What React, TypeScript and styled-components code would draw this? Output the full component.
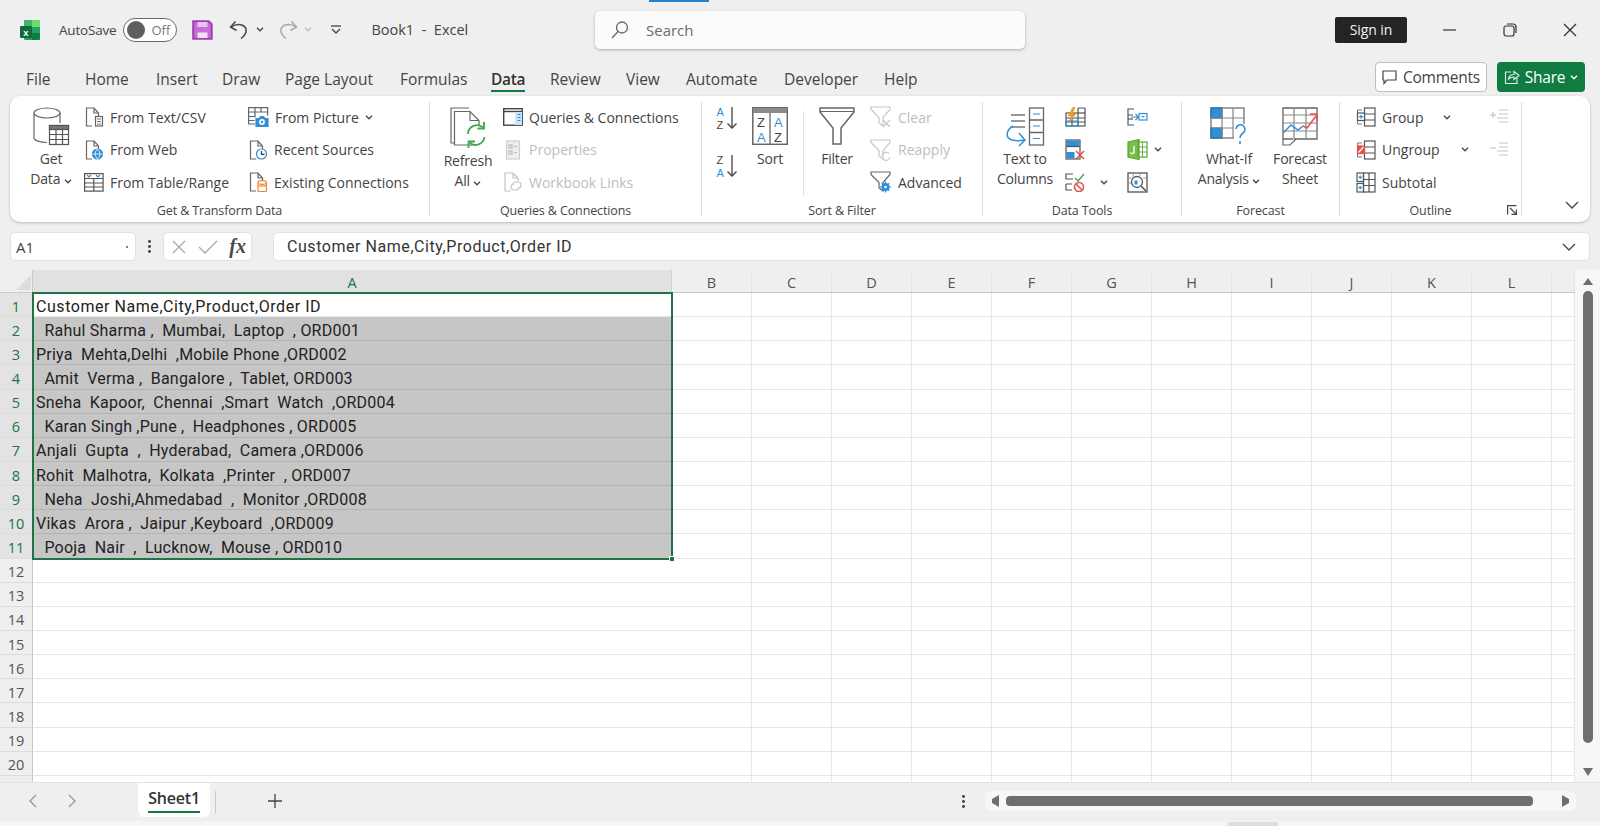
import React from "react";
import styled, { createGlobalStyle } from "styled-components";

const UI_FONT = `"Open Sans", "Noto Sans", "Liberation Sans", sans-serif`;
const CELL_FONT = `Roboto, "Liberation Sans", sans-serif`;

const GlobalStyle = createGlobalStyle`
  html, body {
    margin: 0;
    padding: 0;
    background: #efefef;
  }
  * {
    box-sizing: border-box;
  }
`;

const Window = styled.div`
  position: relative;
  width: 1600px;
  height: 826px;
  overflow: hidden;
  display: flex;
  flex-direction: column;
  background: #efefef;
  font-family: ${UI_FONT};
  color: #424242;
`;

const LoadBar = styled.div`
  position: absolute;
  left: 649px;
  top: 0;
  width: 60px;
  height: 2px;
  background: #1a86d9;
`;

const TitleBar = styled.div`
  height: 60px;
  display: flex;
  align-items: center;
`;

const TitleLeft = styled.div`
  width: 595px;
  display: flex;
  align-items: center;
  padding-left: 20px;
`;

const Slot = styled.div<{ $ml?: number }>`
  display: flex;
  align-items: center;
  flex: none;
  margin-left: ${(p) => p.$ml ?? 0}px;
`;

const AutoSaveText = styled.span`
  font-size: 13.5px;
  letter-spacing: -0.2px;
  color: #444;
`;

const Toggle = styled.div`
  width: 54px;
  height: 24px;
  border: 1.5px solid #6a6a6a;
  border-radius: 12px;
  background: #fff;
  display: flex;
  align-items: center;
  padding-left: 3px;
  font-size: 13px;
  color: #777;
`;

const Knob = styled.span`
  width: 18px;
  height: 18px;
  border-radius: 50%;
  background: #5e5e5e;
  margin-right: 6px;
`;

const BookTitle = styled.span`
  font-size: 14.5px;
  white-space: pre;
  color: #444;
`;

const SearchBox = styled.div`
  width: 430px;
  height: 38px;
  flex: none;
  display: flex;
  align-items: center;
  gap: 17px;
  padding-left: 16px;
  background: #fbfbfb;
  border-radius: 5px;
  box-shadow: 0 1px 3px rgba(0, 0, 0, 0.28);
  font-size: 15px;
  color: #6b6b6b;
`;

const SignIn = styled.div`
  width: 72px;
  height: 26px;
  margin-left: 310px;
  flex: none;
  display: flex;
  align-items: center;
  justify-content: center;
  background: #242424;
  border-radius: 2px;
  color: #f2f2f2;
  font-size: 14px;
  letter-spacing: -0.1px;
`;

const TabBar = styled.div`
  height: 37px;
  display: flex;
  padding-left: 26px;
`;

const Tab = styled.div<{ $w: number; $active?: boolean }>`
  width: ${(p) => p.$w}px;
  flex: none;
  padding-top: 9px;
  font-size: 15.5px;
  white-space: nowrap;
  letter-spacing: ${(p) => (p.$active ? "-0.3px" : "0")};
  font-weight: ${(p) => (p.$active ? 600 : 400)};
  color: ${(p) => (p.$active ? "#333" : "#444")};
`;

const TabLabel = styled.span<{ $active?: boolean }>`
  display: inline-block;
  line-height: 22px;
  height: ${(p) => (p.$active ? 24 : 22)}px;
  border-bottom: ${(p) => (p.$active ? "2px solid #107c41" : "none")};
`;

const TabActions = styled.div`
  margin-left: auto;
  display: flex;
  gap: 10px;
  padding: 3px 15px 0 0;
`;

const CommentsButton = styled.div`
  width: 112px;
  height: 30px;
  display: flex;
  align-items: center;
  justify-content: center;
  gap: 6px;
  background: #fff;
  border: 1px solid #bdbdbd;
  border-radius: 4px;
  font-size: 15.5px;
  letter-spacing: -0.25px;
`;

const ShareButton = styled.div`
  width: 88px;
  height: 30px;
  display: flex;
  align-items: center;
  justify-content: center;
  gap: 5px;
  background: #107c41;
  border-radius: 4px;
  color: #fff;
  font-size: 15.5px;
  letter-spacing: -0.25px;
`;

const Ribbon = styled.div`
  height: 126px;
  margin: 0 10px;
  padding: 6px 0;
  flex: none;
  display: flex;
  background: #fff;
  border-radius: 10px;
  box-shadow: 0 1px 3px rgba(0, 0, 0, 0.22);
`;

const Group = styled.div<{ $w: number }>`
  position: relative;
  width: ${(p) => p.$w}px;
  flex: none;
  display: flex;
  flex-direction: column;
  border-right: 1px solid #dcdcdc;
`;

const GroupBody = styled.div<{ $pl: number }>`
  height: 102px;
  display: flex;
  align-items: flex-start;
  padding-left: ${(p) => p.$pl}px;
`;

const GroupLabel = styled.div`
  height: 12px;
  display: flex;
  align-items: center;
  justify-content: center;
  font-size: 12.5px;
  letter-spacing: -0.12px;
  color: #444;
`;

const Launcher = styled.div`
  position: absolute;
  right: 4px;
  bottom: 1px;
  line-height: 0;
`;

const LargeButton = styled.div<{ $w: number; $ml?: number }>`
  width: ${(p) => p.$w}px;
  margin-left: ${(p) => p.$ml ?? 0}px;
  flex: none;
  display: flex;
  flex-direction: column;
  align-items: center;
  padding-top: 5px;
  font-size: 14px;
  letter-spacing: -0.2px;
  color: #444;
`;

const LargeIcon = styled.div`
  height: 39px;
  display: flex;
  align-items: flex-start;
  justify-content: center;
`;

const LargeText = styled.div<{ $gap?: number }>`
  margin-top: ${(p) => p.$gap ?? 3}px;
  line-height: 20px;
  text-align: center;
  white-space: nowrap;
`;

const SmallColumn = styled.div<{ $w?: number; $ml?: number; $gap?: number }>`
  width: ${(p) => (p.$w ? `${p.$w}px` : "auto")};
  margin-left: ${(p) => p.$ml ?? 0}px;
  flex: none;
  display: flex;
  flex-direction: column;
  gap: ${(p) => p.$gap ?? 2.5}px;
`;

const SmallItem = styled.div<{ $disabled?: boolean }>`
  height: 30px;
  display: flex;
  align-items: center;
  gap: 6px;
  white-space: nowrap;
  font-size: 14px;
  color: ${(p) => (p.$disabled ? "#bdbdbd" : "#444")};
`;

const ChevronWrap = styled.span<{ $ml: number }>`
  display: inline-flex;
  margin-left: ${(p) => p.$ml}px;
`;

const VDivider = styled.div<{ $ml: number }>`
  width: 1px;
  height: 85px;
  margin: 9px 0 0 ${(p) => p.$ml}px;
  flex: none;
  background: #e0e0e0;
`;

const RibbonCollapse = styled.div`
  flex: 1;
  display: flex;
  align-items: flex-end;
  justify-content: flex-end;
  padding: 0 11px 7px 0;
`;

const FormulaBar = styled.div`
  height: 29px;
  margin-top: 10px;
  padding: 0 10px;
  flex: none;
  display: flex;
  align-items: stretch;
`;

const NameBox = styled.div`
  width: 126px;
  flex: none;
  display: flex;
  align-items: center;
  justify-content: space-between;
  padding: 0 7px 0 5px;
  background: #fff;
  border: 1px solid #e2e2e2;
  border-radius: 5px;
  font-size: 15px;
  color: #444;
`;

const TinyDot = styled.span`
  width: 2px;
  height: 2px;
  border-radius: 50%;
  background: #555;
`;

const DotsSlot = styled.div`
  width: 27px;
  flex: none;
  display: flex;
  align-items: center;
  justify-content: center;
  line-height: 0;
`;

const FormulaButtons = styled.div`
  width: 89px;
  flex: none;
  display: flex;
  align-items: center;
  justify-content: space-between;
  padding: 0 5px 0 7px;
  background: #fff;
  border: 1px solid #e2e2e2;
  border-radius: 5px;
`;

const FxText = styled.span`
  font-family: "Liberation Serif", serif;
  font-style: italic;
  font-weight: 700;
  font-size: 20px;
  color: #4a4a4a;
`;

const FormulaInput = styled.div`
  flex: 1;
  margin-left: 21px;
  display: flex;
  align-items: center;
  justify-content: space-between;
  padding: 0 13px 0 13px;
  background: #fff;
  border: 1px solid #e2e2e2;
  border-radius: 5px;
  font-family: ${CELL_FONT};
  font-size: 16px;
  letter-spacing: 0.55px;
  color: #333;
  white-space: pre;
`;

const SheetArea = styled.div`
  height: 512px;
  margin-top: 9px;
  flex: none;
  display: flex;
  background: #fff;
`;

const Sheet = styled.div`
  position: relative;
  width: 1575px;
  flex: none;
  overflow: hidden;
`;

const HeaderRow = styled.div`
  height: 23px;
  display: flex;
  background: #efefef;
  border-bottom: 1px solid #c8c8c8;
`;

const Corner = styled.div`
  width: 33px;
  flex: none;
  position: relative;
  display: flex;
  align-items: flex-end;
  justify-content: flex-end;
  padding: 0 1px 2px 0;
  border-right: 1px solid #c8c8c8;
  line-height: 0;
`;

const ColHeader = styled.div<{ $w: number; $selected?: boolean }>`
  width: ${(p) => p.$w}px;
  flex: none;
  display: flex;
  align-items: center;
  justify-content: center;
  padding-top: 2px;
  font-size: 14.5px;
  color: ${(p) => (p.$selected ? "#217346" : "#555")};
  background: ${(p) => (p.$selected ? "#e1e1e1" : "transparent")};
  border-right: 1px solid ${(p) => (p.$selected ? "#d0d0d0" : "#e4e4e4")};
`;

const Row = styled.div`
  height: 24.15px;
  display: flex;
`;

const RowNum = styled.div<{ $selected?: boolean }>`
  width: 33px;
  flex: none;
  display: flex;
  align-items: center;
  justify-content: center;
  padding-top: 3px;
  font-size: 14.5px;
  color: ${(p) => (p.$selected ? "#217346" : "#555")};
  background: ${(p) => (p.$selected ? "#e3e3e3" : "#efefef")};
  border-right: 1px solid #c8c8c8;
  border-bottom: 1px solid #dcdcdc;
`;

const CellA = styled.div<{ $filled?: boolean; $wide?: boolean }>`
  width: 639px;
  flex: none;
  padding: 3px 0 0 3px;
  display: flex;
  align-items: center;
  white-space: pre;
  overflow: hidden;
  font-family: ${CELL_FONT};
  font-size: 16px;
  letter-spacing: ${(p) => (p.$wide ? "0.55px" : "0.22px")};
  color: #222;
  background: ${(p) => (p.$filled ? "#c6c6c6" : "#fff")};
  border-bottom: 1px solid ${(p) => (p.$filled ? "#b3b3b3" : "#e6e6e6")};
`;

const Cell = styled.div<{ $w: number }>`
  width: ${(p) => p.$w}px;
  flex: none;
  border-right: 1px solid #e8e8e8;
  border-bottom: 1px solid #e6e6e6;
`;

const Selection = styled.div`
  position: absolute;
  left: 32px;
  top: 22px;
  width: 641px;
  height: 268px;
  border: 2px solid #217346;
  pointer-events: none;
`;

const FillHandle = styled.div`
  position: absolute;
  right: -4px;
  bottom: -4px;
  width: 6px;
  height: 6px;
  background: #217346;
  border: 1px solid #fff;
`;

const VScroll = styled.div`
  flex: 1;
  display: flex;
  flex-direction: column;
  align-items: center;
  padding: 7px 0 0 0;
  background: #f6f6f6;
`;

const VThumb = styled.div`
  width: 10px;
  height: 452px;
  margin: 5px 0 25px;
  border-radius: 5px;
  background: #6e6e6e;
`;

const SheetBar = styled.div`
  height: 39px;
  flex: none;
  display: flex;
  align-items: flex-start;
  background: #efefef;
  border-top: 1px solid #e2e2e2;
`;

const NavArrows = styled.div`
  width: 138px;
  height: 36px;
  flex: none;
  display: flex;
  align-items: center;
  gap: 31px;
  padding-left: 28px;
`;

const SheetTab = styled.div`
  width: 72px;
  height: 34px;
  flex: none;
  display: flex;
  align-items: flex-start;
  justify-content: center;
  background: #fff;
  border-radius: 0 0 6px 6px;
  font-size: 16px;
  font-weight: 600;
  letter-spacing: -0.2px;
  color: #333;
  padding-top: 4px;
`;

const SheetTabLabel = styled.span`
  display: inline-block;
  height: 26px;
  line-height: 23px;
  border-bottom: 2px solid #107c41;
`;

const TabSeparator = styled.div`
  width: 1px;
  height: 23px;
  margin: 8px 0 0 5px;
  flex: none;
  background: #c9c9c9;
`;

const AddSheet = styled.div`
  height: 36px;
  margin-left: 52px;
  flex: none;
  display: flex;
  align-items: center;
  line-height: 0;
`;

const SheetDots = styled.div`
  height: 36px;
  margin-left: 680px;
  flex: none;
  display: flex;
  align-items: center;
  line-height: 0;
`;

const HScroll = styled.div`
  width: 591px;
  height: 20px;
  margin: 8px 0 0 20px;
  flex: none;
  display: flex;
  align-items: center;
  padding: 0 6px;
  background: #f7f7f7;
  border-radius: 6px;
`;

const HThumb = styled.div`
  width: 527px;
  height: 10px;
  margin: 0 auto 0 7px;
  border-radius: 4px;
  background: #6e6e6e;
`;

const StatusStrip = styled.div`
  flex: 1;
  display: flex;
  justify-content: flex-end;
  padding-right: 322px;
  background: #f5f5f5;
`;

const StatusHandle = styled.div`
  width: 50px;
  height: 4px;
  margin-top: 1px;
  background: #dddddd;
`;

const G = "#666";
const BLUE = "#2f8fd8";

type SvgProps = { w: number; h: number; children: React.ReactNode };

const Svg = ({ w, h, children }: SvgProps) => (
  <svg
    width={w}
    height={h}
    viewBox={`0 0 ${w} ${h}`}
    fill="none"
    stroke={G}
    strokeWidth={1.2}
    style={{ flex: "none", display: "block" }}
  >
    {children}
  </svg>
);

const Chevron = ({ color = "#444" }: { color?: string }) => (
  <svg width="8" height="5" viewBox="0 0 8 5" fill="none" stroke={color} strokeWidth={1.3}>
    <path d="M1 .8l3 3 3-3" />
  </svg>
);

const ExcelLogo = () => (
  <svg width="20" height="20" viewBox="0 0 20 20" style={{ display: "block" }}>
    <rect x="4" y="0" width="16" height="20" rx="1.5" fill="#21a366" />
    <path d="M12 0h6.5A1.5 1.5 0 0 1 20 1.5V7h-8z" fill="#6fdc6a" />
    <path d="M4 0h8v7H4z" fill="#3fb56e" />
    <path d="M12 13h8v5.5a1.5 1.5 0 0 1-1.5 1.5H12z" fill="#107c41" />
    <rect x="0" y="6" width="12" height="12" rx="1" fill="#0f6b3a" />
    <text x="6" y="15.5" textAnchor="middle" fontSize="9.5" fontWeight="700" fill="#fff" fontFamily="Liberation Sans, sans-serif">
      x
    </text>
  </svg>
);

const SaveIcon = () => (
  <svg width="21" height="20" viewBox="0 0 21 20" style={{ display: "block" }}>
    <path d="M1.200 1.200h15.500l3 3v14.600H1.200z" fill="#c86dd7" stroke="#a03fb2" strokeWidth="2" />
    <rect x="5.500" y="2" width="10" height="5" fill="#e9c3ef" />
    <rect x="5.500" y="12.500" width="10" height="5.500" fill="#f3dff6" />
  </svg>
);

const UndoIcon = ({ color }: { color: string }) => (
  <svg width="20" height="20" viewBox="0 0 20 20" fill="none" stroke={color} strokeWidth={1.5} style={{ display: "block" }}>
    <path d="M6.500 1.500L1.500 7l6 3.500" />
    <path d="M2 7c3-2 8-3.500 12-1.500 4.500 2.500 4.500 8-2 13" />
  </svg>
);

const RedoIcon = ({ color }: { color: string }) => (
  <svg width="20" height="20" viewBox="0 0 20 20" fill="none" stroke={color} strokeWidth={1.5} style={{ display: "block" }}>
    <path d="M13.500 1.500l5 5.500-6 3.500" />
    <path d="M18 7c-3-2-8-3.500-12-1.500-4.500 2.500-4.500 8 2 13" />
  </svg>
);

const CustomizeIcon = () => (
  <svg width="10" height="9" viewBox="0 0 10 9" fill="none" stroke="#444" strokeWidth={1.3} style={{ display: "block" }}>
    <path d="M0 1h10" />
    <path d="M1 4l4 4 4-4" />
  </svg>
);

const SearchIcon = () => (
  <svg width="18" height="18" viewBox="0 0 18 18" fill="none" stroke="#666" strokeWidth={1.3} style={{ display: "block" }}>
    <circle cx="11" cy="6.500" r="5.500" />
    <path d="M7 10.500L1 17" />
  </svg>
);

const MinimizeIcon = () => (
  <svg width="13" height="2" viewBox="0 0 13 2" stroke="#333" strokeWidth={1.2} style={{ display: "block" }}>
    <path d="M0 1h13" />
  </svg>
);

const RestoreIcon = () => (
  <svg width="14" height="14" viewBox="0 0 14 14" fill="none" stroke="#333" strokeWidth={1.2} style={{ display: "block" }}>
    <rect x="1" y="3" width="10" height="10" rx="2" />
    <path d="M4 1h6a3 3 0 0 1 3 3v6" />
  </svg>
);

const CloseIcon = () => (
  <svg width="14" height="14" viewBox="0 0 14 14" fill="none" stroke="#333" strokeWidth={1.3} style={{ display: "block" }}>
    <path d="M1 1l12 12M13 1L1 13" />
  </svg>
);

const CommentIcon = () => (
  <svg width="15" height="15" viewBox="0 0 15 15" fill="none" stroke="#444" strokeWidth={1.2}>
    <path d="M1 1h13v9H5l-3 3.500V10H1z" />
  </svg>
);

const ShareIcon = () => (
  <svg width="16" height="16" viewBox="0 0 16 16" fill="none" stroke="#dff0e6" strokeWidth={1.1}>
    <path d="M7 3H1.500v11.500H13V9" />
    <path d="M4.500 10c.3-3 2.500-4.500 5.500-4.500V2.500l5 4-5 4V8c-2.200 0-4 .6-5.500 2z" />
  </svg>
);

/* ribbon icons */

const GetDataIcon = () => (
  <Svg w={37} h={39}>
    <path d="M1 7v24c0 2.500 6 4.500 13 4.500" />
    <ellipse cx="14" cy="6" rx="13" ry="5" />
    <path d="M27 6v10" />
    <rect x="16.500" y="18.500" width="19" height="19" fill="#fff" stroke="#555" />
    <rect x="16.500" y="18.500" width="19" height="4" fill="#777" stroke="#555" />
    <path d="M23 22v15M29.500 22v15M17 27.500h18M17 32.500h18" stroke="#555" />
  </Svg>
);

const DocBase = ({ children }: { children?: React.ReactNode }) => (
  <Svg w={20} h={20}>
    <path d="M8 19H2.500V1H10l4.500 5v3" />
    <path d="M10 1v5h4.500" />
    {children}
  </Svg>
);

const TextIcon = () => (
  <DocBase>
    <rect x="11.500" y="9.500" width="7" height="9.500" fill="#fff" />
    <path d="M13 12h4M13 14.500h4M13 17h4" strokeWidth={0.9} />
  </DocBase>
);

const WebIcon = () => (
  <DocBase>
    <circle cx="13.500" cy="14" r="5" fill={BLUE} stroke={BLUE} />
    <path d="M8.500 14h10M13.500 9c-3 3-3 7 0 10M13.500 9c3 3 3 7 0 10" stroke="#fff" strokeWidth={0.8} />
  </DocBase>
);

const TableIcon = () => (
  <Svg w={20} h={19}>
    <rect x=".6" y=".6" width="18.500" height="17.500" stroke="#555" />
    <path d="M.6 5.500h18.500M.6 10h18.500M.6 14h18.500M9.800 5.500v12.500" stroke="#555" />
    <path d="M3 2l2 2 2-2M12 2l2 2 2-2" stroke={BLUE} />
  </Svg>
);

const PictureIcon = () => (
  <Svg w={21} h={20}>
    <path d="M7 17H.6V.6h19v8" />
    <path d="M.6 5h19M.6 9.500h7M.6 13.500h6M7 .6v10M13 .6v5" />
    <path d="M8 19.400V11.500h3l1.500-2h3l1.500 2h3v7.900z" fill={BLUE} stroke={BLUE} />
    <circle cx="14" cy="15" r="2.300" fill="#fff" stroke="#fff" />
    <circle cx="14" cy="15" r="1.200" fill={BLUE} stroke="none" />
  </Svg>
);

const RecentIcon = () => (
  <DocBase>
    <circle cx="13.500" cy="14" r="5" fill="#fff" stroke={BLUE} />
    <path d="M13.500 11v3.300h3" stroke="#333" />
  </DocBase>
);

const ExistingIcon = () => (
  <DocBase>
    <rect x="10" y="11" width="8.500" height="8.500" rx="1" fill="#fff" stroke="#e98a2e" />
    <ellipse cx="14.200" cy="10.500" rx="4.200" ry="1.800" fill="#fff" stroke="#e98a2e" />
    <path d="M10 14h8.500" stroke="#e98a2e" />
  </DocBase>
);

const RefreshIcon = () => (
  <Svg w={37} h={42}>
    <path d="M4 36H1V1h18" />
    <path d="M26 38H4.500V4.500H20l9 9V19" fill="#fff" />
    <path d="M20 4.500v9h9" />
    <path d="M18 27a9 9 0 0 1 15-6.500M34.500 30a9 9 0 0 1-15 5.500" stroke="#3fa652" strokeWidth={1.8} />
    <path d="M34 15v6.500h-6.500M18.500 41v-6.500H25" stroke="#3fa652" strokeWidth={1.8} />
  </Svg>
);

const QueriesIcon = () => (
  <Svg w={20} h={18}>
    <rect x=".7" y=".7" width="18.500" height="16.500" stroke="#444" strokeWidth={1.4} />
    <path d="M.7 3.500h18.500" stroke="#444" strokeWidth={1.4} />
    <rect x="12" y="4" width="7" height="13" fill="#cfe4f6" stroke="none" />
    <path d="M14.500 6.500h3M14.500 9.500h3M14.500 12.500h3" stroke={BLUE} />
  </Svg>
);

const PropertiesIcon = () => (
  <Svg w={20} h={20}>
    <rect x="3.500" y="1" width="13" height="18" fill="#eee" stroke="#cfcfcf" />
    <rect x="6" y="5" width="3" height="3" stroke="#bbb" />
    <rect x="6" y="11" width="3" height="3" stroke="#bbb" />
    <path d="M11 6.500h3M11 12.500h3" stroke="#bbb" />
  </Svg>
);

const LinksIcon = () => (
  <Svg w={20} h={20}>
    <path d="M8 19H2V1h8l5 5v3M10 1v5h5" stroke="#c4c4c4" />
    <path d="M10 13a3 3 0 0 1 3-3h2a3 3 0 0 1 0 6M16 15a3 3 0 0 1-3 3h-2a3 3 0 0 1 0-6" stroke="#c4c4c4" />
  </Svg>
);

const LetterText = styled.text<{ $blue?: boolean; $big?: boolean }>`
  font-family: "Liberation Sans", sans-serif;
  font-size: ${(p) => (p.$big ? 13 : 11)}px;
  fill: ${(p) => (p.$blue ? BLUE : "#444")};
  stroke: none;
`;

const SortPairIcon = ({ top, bottom, blueFirst }: { top: string; bottom: string; blueFirst: boolean }) => (
  <Svg w={22} h={25}>
    <LetterText x="0.500" y="11" $blue={blueFirst}>
      {top}
    </LetterText>
    <LetterText x="0.500" y="23.500" $blue={!blueFirst}>
      {bottom}
    </LetterText>
    <path d="M16 2v21M11.500 18.500l4.500 4.500 4.500-4.500" stroke="#444" strokeWidth={1.3} />
  </Svg>
);

const SortIcon = () => (
  <Svg w={36} h={38}>
    <rect x=".8" y=".8" width="34.500" height="36.500" stroke="#666" strokeWidth={1.5} />
    <rect x="1" y="1" width="34" height="5" fill="#8a8a8a" stroke="none" />
    <path d="M18 6v31" strokeWidth={1.3} />
    <LetterText x="5" y="19.500" $big>
      Z
    </LetterText>
    <LetterText x="5" y="34.500" $blue $big>
      A
    </LetterText>
    <LetterText x="22" y="19.500" $blue $big>
      A
    </LetterText>
    <LetterText x="22" y="34.500" $big>
      Z
    </LetterText>
  </Svg>
);

const FilterIcon = () => (
  <Svg w={36} h={38}>
    <path d="M1 1h34v4L22 21v16h-8V21L1 5z" strokeWidth={1.5} stroke="#666" />
    <path d="M1 4.500h34" strokeWidth={1.2} />
  </Svg>
);

const FunnelBase = ({ color, children }: { color: string; children?: React.ReactNode }) => (
  <Svg w={22} h={22}>
    <path d="M1 1h19v2.500l-7 8V20l-4-3v-5.500l-8-8z" stroke={color} />
    {children}
  </Svg>
);

const ClearIcon = () => (
  <FunnelBase color="#c8c8c8">
    <path d="M13 14l7 7M20 14l-7 7" stroke="#c8c8c8" />
  </FunnelBase>
);

const ReapplyIcon = () => (
  <FunnelBase color="#c8c8c8">
    <path d="M12 17a4 4 0 0 1 7-2.500M20 18a4 4 0 0 1-7 2" stroke="#c8c8c8" />
  </FunnelBase>
);

const AdvancedIcon = () => (
  <FunnelBase color="#666">
    <circle cx="15.500" cy="16" r="3.500" fill={BLUE} stroke={BLUE} />
    <circle cx="15.500" cy="16" r="1.300" fill="#fff" stroke="none" />
    <path d="M15.500 10.500v2.500M15.500 19v2.500M10 16h2.500M18.500 16H21M11.700 12.200l1.700 1.700M17.600 18.100l1.700 1.700M19.300 12.200l-1.700 1.700M13.400 18.100l-1.700 1.700" stroke={BLUE} strokeWidth={1.2} />
  </FunnelBase>
);

const TextColumnsIcon = () => (
  <Svg w={40} h={40}>
    <path d="M6 8h14M6 14h14M6 20h14" stroke="#777" strokeWidth={1.5} />
    <rect x="24.500" y="1" width="14" height="37" fill="#fff" stroke="#666" strokeWidth={1.3} />
    <path d="M24.500 13h14M24.500 25.500h14" stroke="#666" strokeWidth={1.3} />
    <path d="M28 7h7M28 19h7M28 31.500h7" stroke={BLUE} strokeWidth={1.2} />
    <path d="M8 19c-7 4-8 12-1 14 4 1 8 1 12 0" stroke={BLUE} strokeWidth={1.5} />
    <path d="M14 26l6 7-6 6" stroke={BLUE} strokeWidth={1.5} />
  </Svg>
);

const FlashIcon = () => (
  <Svg w={21} h={20}>
    <rect x="1" y="6" width="19" height="13" stroke="#555" />
    <path d="M1 11h19M1 15h19M7 6v13M13 1v18M20 1v5M13 1h7" stroke="#555" />
    <path d="M8 0L3 9h3.500L4 15l7-8H7.500L10 0z" fill="#ee9a2c" stroke="#ee9a2c" strokeWidth={0.5} />
    <path d="M1 14h12v5H1z" fill="none" stroke={BLUE} />
  </Svg>
);

const DuplicatesIcon = () => (
  <Svg w={21} h={21}>
    <rect x="1" y="1" width="14" height="19" stroke="#555" />
    <rect x="1.500" y="1.500" width="13" height="6" fill={BLUE} stroke="none" />
    <rect x="1.500" y="13" width="8" height="6.500" fill={BLUE} stroke="none" />
    <path d="M1 7.500h14" stroke="#555" />
    <path d="M11 12l8 8M19 12l-8 8" stroke="#e0524a" strokeWidth={1.5} />
  </Svg>
);

const ValidationIcon = () => (
  <Svg w={21} h={20}>
    <path d="M8 2H1v5h7M1 12v6h6M1 12h6" stroke="#555" />
    <path d="M10 6l3 3 6-7" stroke="#3fa652" strokeWidth={1.4} />
    <circle cx="14" cy="15" r="4.500" stroke="#e0524a" strokeWidth={1.6} />
    <path d="M11 12l6 6" stroke="#e0524a" strokeWidth={1.6} />
  </Svg>
);

const ConsolidateIcon = () => (
  <Svg w={21} h={18}>
    <path d="M7 1H1v6h5M1 7v10h6" stroke="#555" />
    <path d="M1 11h5" stroke="#555" />
    <path d="M4 9h7M8.500 6l3 3-3 3" stroke={BLUE} />
    <rect x="12" y="5.500" width="8" height="6.500" stroke={BLUE} />
    <path d="M14.500 8.700h3" stroke={BLUE} />
  </Svg>
);

const ModelIcon = () => (
  <Svg w={21} h={21}>
    <path d="M1 3l11-2.500V20.500L1 18z" fill="#7bbf4a" stroke="#5ba52f" />
    <rect x="11" y="3" width="9" height="15" stroke="#5ba52f" />
    <path d="M11 8h9M11 13h9M15.500 3v15" stroke="#5ba52f" strokeWidth={0.9} />
    <path d="M7 7v6.500a2 2 0 0 1-3.500 0" stroke="#fff" strokeWidth={1.3} />
  </Svg>
);

const ManageModelIcon = () => (
  <Svg w={21} h={21}>
    <rect x="1" y="1" width="19" height="19" stroke="#555" strokeWidth={1.3} />
    <path d="M1 6h4M1 11h4M6 1v4M13 1v3M16 6h4" stroke="#888" strokeWidth={0.8} />
    <circle cx="10" cy="10" r="5.500" fill="#fff" stroke="#555" strokeWidth={1.3} />
    <rect x="7.500" y="8.500" width="3" height="4" fill={BLUE} stroke="none" />
    <path d="M14 14l5 5" stroke="#555" strokeWidth={1.6} />
  </Svg>
);

const WhatIfIcon = () => (
  <Svg w={38} h={38}>
    <rect x="1" y="1" width="33" height="30" stroke="#666" strokeWidth={1.2} />
    <rect x="1" y="1" width="11" height="10" fill={BLUE} stroke="#1e6fb0" />
    <rect x="1" y="21" width="11" height="10" fill={BLUE} stroke="#1e6fb0" />
    <path d="M12 1v30M23 1v30M1 11h33M1 21h33" stroke="#888" />
    <rect x="24" y="17" width="13" height="20" fill="#fff" stroke="none" />
    <path d="M26 22a4.500 4.500 0 1 1 7 4c-2 1.500-3 2.500-3 5" stroke={BLUE} strokeWidth={1.6} />
    <path d="M30 34v3" stroke={BLUE} strokeWidth={1.6} />
  </Svg>
);

const ForecastIcon = () => (
  <Svg w={36} h={39}>
    <path d="M11 32H1V1h34v31H12" stroke="#666" strokeWidth={1.3} />
    <path d="M1 8h34M1 16h34M1 24h34M12 1v31M24 1v31" stroke="#888" />
    <path d="M1 26l8-8 7 5 5-4" stroke={BLUE} strokeWidth={1.5} />
    <path d="M21 19l4 2 9-12" stroke="#e0524a" strokeWidth={1.5} />
    <path d="M28 7h7v7" stroke="#e0524a" strokeWidth={1.5} />
    <path d="M1 32v6h7l6-6" stroke="#666" strokeWidth={1.2} />
  </Svg>
);

const GroupIcon = ({ color, mark }: { color: string; mark: "plus" | "slash" }) => (
  <Svg w={20} h={20}>
    <rect x="8.500" y="1" width="10.500" height="18" stroke="#555" />
    <path d="M8.500 7h10.500M8.500 13h10.500" stroke="#555" />
    <path d="M6 3H1.500v14H6" stroke="#555" strokeWidth={0.8} />
    <rect x="1.500" y="6" width="7" height="7.500" fill={mark === "plus" ? "#fff" : color} stroke={mark === "plus" ? "#555" : color} />
    {mark === "plus" ? (
      <path d="M3 9.700h4M5 7.700v4" stroke={color} strokeWidth={1.2} />
    ) : (
      <path d="M2.500 12.500l5-5.500" stroke="#fff" strokeWidth={1.2} />
    )}
  </Svg>
);

const SubtotalIcon = () => (
  <Svg w={20} h={21}>
    <rect x="7.500" y="1" width="11.500" height="19" stroke="#555" />
    <path d="M7.500 7.500H19M7.500 13.500H19M13 1v19" stroke="#555" />
    <rect x="1" y="1" width="6.500" height="8.500" stroke="#555" />
    <rect x="1" y="11.500" width="6.500" height="8.500" stroke="#555" />
    <path d="M2.500 5.200h3.500M4.200 3.500v3.500M2.500 15.700h3.500M4.200 14v3.500" stroke={BLUE} />
  </Svg>
);

const OutlineDetailIcon = ({ minus }: { minus?: boolean }) => (
  <Svg w={20} h={18}>
    <path d="M10 2h9M10 6h9M8 10h11M10 14h9" stroke="#c6c6c6" />
    <path d="M1 7h6" stroke="#c6c6c6" />
    {!minus && <path d="M4 4v6" stroke="#c6c6c6" />}
  </Svg>
);

const LauncherIcon = () => (
  <Svg w={10} h={10}>
    <path d="M.6 9.400V.6h8.800" stroke="#444" />
    <path d="M3 3l5.500 5.500M9.400 4.500v4.900H4.500" stroke="#444" />
  </Svg>
);

const NameBoxX = () => (
  <Svg w={16} h={16}>
    <path d="M2 2l12 12M14 2L2 14" stroke="#a8a8a8" strokeWidth={1.3} />
  </Svg>
);

const CheckMark = () => (
  <Svg w={20} h={16}>
    <path d="M1 8l6 6L19 2" stroke="#a8a8a8" strokeWidth={1.3} />
  </Svg>
);

const VerticalDots = ({ color = "#444" }: { color?: string }) => (
  <svg width="3" height="13" viewBox="0 0 3 13" fill={color}>
    <rect width="3" height="3" rx="1.400" />
    <rect y="5" width="3" height="3" rx="1.400" />
    <rect y="10" width="3" height="3" rx="1.400" />
  </svg>
);

const NavIcon = ({ left }: { left?: boolean }) => (
  <svg width="9" height="14" viewBox="0 0 9 14" fill="none" stroke="#9a9a9a" strokeWidth={1.4} style={{ display: "block" }}>
    <path d={left ? "M8 1L2 7l6 6" : "M1 1l6 6-6 6"} />
  </svg>
);

const PlusIcon = () => (
  <svg width="14" height="14" viewBox="0 0 14 14" stroke="#444" strokeWidth={1.3}>
    <path d="M7 0v14M0 7h14" />
  </svg>
);

const Triangle = ({ dir }: { dir: "up" | "down" | "left" | "right" }) => {
  const paths = {
    up: "M5 1L10 8H0z",
    down: "M0 0h10L5 8z",
    left: "M8 0v12L1 8V4z",
    right: "M0 0v12l7-4V4z",
  };
  const size = dir === "up" || dir === "down" ? [10, 9] : [8, 12];
  return (
    <svg width={size[0]} height={size[1]} viewBox={`0 0 ${size[0]} ${size[1]}`} fill="#6e6e6e" style={{ display: "block", flex: "none" }}>
      <path d={paths[dir]} />
    </svg>
  );
};

const tabs: [string, number][] = [
  ["File", 59],
  ["Home", 71],
  ["Insert", 66],
  ["Draw", 63],
  ["Page Layout", 115],
  ["Formulas", 91],
  ["Data", 59],
  ["Review", 76],
  ["View", 60],
  ["Automate", 98],
  ["Developer", 100],
  ["Help", 40],
];

const cells = [
  "Customer Name,City,Product,Order ID",
  "  Rahul Sharma ,  Mumbai,  Laptop  , ORD001",
  "Priya  Mehta,Delhi  ,Mobile Phone ,ORD002",
  "  Amit  Verma ,  Bangalore ,  Tablet, ORD003",
  "Sneha  Kapoor,  Chennai  ,Smart  Watch  ,ORD004",
  "  Karan Singh ,Pune ,  Headphones , ORD005",
  "Anjali  Gupta  ,  Hyderabad,  Camera ,ORD006",
  "Rohit  Malhotra,  Kolkata  ,Printer  , ORD007",
  "  Neha  Joshi,Ahmedabad  ,  Monitor ,ORD008",
  "Vikas  Arora ,  Jaipur ,Keyboard  ,ORD009",
  "  Pooja  Nair  ,  Lucknow,  Mouse , ORD010",
];

const columns: [string, number][] = [
  ["B", 80],
  ["C", 80],
  ["D", 80],
  ["E", 80],
  ["F", 80],
  ["G", 80],
  ["H", 80],
  ["I", 80],
  ["J", 80],
  ["K", 80],
  ["L", 80],
  ["", 23],
];

const rows = Array.from({ length: 21 }, (_, i) => i + 1);

const App = () => {
  return (
    <Window>
      <GlobalStyle />
      <LoadBar />

      <TitleBar>
        <TitleLeft>
          <ExcelLogo />
          <Slot $ml={19}>
            <AutoSaveText>AutoSave</AutoSaveText>
          </Slot>
          <Slot $ml={7}>
            <Toggle>
              <Knob />
              Off
            </Toggle>
          </Slot>
          <Slot $ml={15}>
            <SaveIcon />
          </Slot>
          <Slot $ml={16}>
            <UndoIcon color="#444" />
          </Slot>
          <Slot $ml={7}>
            <Chevron />
          </Slot>
          <Slot $ml={14}>
            <RedoIcon color="#a8a8a8" />
          </Slot>
          <Slot $ml={6}>
            <Chevron color="#bbb" />
          </Slot>
          <Slot $ml={19}>
            <CustomizeIcon />
          </Slot>
          <Slot $ml={30}>
            <BookTitle>Book1  -  Excel</BookTitle>
          </Slot>
        </TitleLeft>
        <SearchBox>
          <SearchIcon />
          Search
        </SearchBox>
        <SignIn>Sign in</SignIn>
        <Slot $ml={36}>
          <MinimizeIcon />
        </Slot>
        <Slot $ml={47}>
          <RestoreIcon />
        </Slot>
        <Slot $ml={46}>
          <CloseIcon />
        </Slot>
      </TitleBar>

      <TabBar>
        {tabs.map(([name, w]) => (
          <Tab key={name} $w={w} $active={name === "Data"}>
            <TabLabel $active={name === "Data"}>{name}</TabLabel>
          </Tab>
        ))}
        <TabActions>
          <CommentsButton>
            <CommentIcon />
            Comments
          </CommentsButton>
          <ShareButton>
            <ShareIcon />
            Share
            <Chevron color="#fff" />
          </ShareButton>
        </TabActions>
      </TabBar>

      <Ribbon>
        <Group $w={420}>
          <GroupBody $pl={11}>
            <LargeButton $w={60}>
              <LargeIcon>
                <GetDataIcon />
              </LargeIcon>
              <LargeText>
                Get
                <br />
                Data <Chevron />
              </LargeText>
            </LargeButton>
            <SmallColumn $w={164} $ml={3}>
              <SmallItem>
                <TextIcon />
                From Text/CSV
              </SmallItem>
              <SmallItem>
                <WebIcon />
                From Web
              </SmallItem>
              <SmallItem>
                <TableIcon />
                From Table/Range
              </SmallItem>
            </SmallColumn>
            <SmallColumn>
              <SmallItem>
                <PictureIcon />
                From Picture <Chevron />
              </SmallItem>
              <SmallItem>
                <RecentIcon />
                Recent Sources
              </SmallItem>
              <SmallItem>
                <ExistingIcon />
                Existing Connections
              </SmallItem>
            </SmallColumn>
          </GroupBody>
          <GroupLabel>Get &amp; Transform Data</GroupLabel>
        </Group>

        <Group $w={272}>
          <GroupBody $pl={6}>
            <LargeButton $w={64}>
              <LargeIcon>
                <RefreshIcon />
              </LargeIcon>
              <LargeText $gap={5}>
                Refresh
                <br />
                All <Chevron />
              </LargeText>
            </LargeButton>
            <SmallColumn $ml={3}>
              <SmallItem>
                <QueriesIcon />
                Queries &amp; Connections
              </SmallItem>
              <SmallItem $disabled>
                <PropertiesIcon />
                Properties
              </SmallItem>
              <SmallItem $disabled>
                <LinksIcon />
                Workbook Links
              </SmallItem>
            </SmallColumn>
          </GroupBody>
          <GroupLabel>Queries &amp; Connections</GroupLabel>
        </Group>

        <Group $w={281}>
          <GroupBody $pl={14}>
            <SmallColumn $gap={18}>
              <SmallItem>
                <SortPairIcon top="A" bottom="Z" blueFirst />
              </SmallItem>
              <SmallItem>
                <SortPairIcon top="Z" bottom="A" blueFirst={false} />
              </SmallItem>
            </SmallColumn>
            <LargeButton $w={44} $ml={10}>
              <LargeIcon>
                <SortIcon />
              </LargeIcon>
              <LargeText>Sort</LargeText>
            </LargeButton>
            <VDivider $ml={11} />
            <LargeButton $w={50} $ml={8}>
              <LargeIcon>
                <FilterIcon />
              </LargeIcon>
              <LargeText>Filter</LargeText>
            </LargeButton>
            <SmallColumn $ml={8}>
              <SmallItem $disabled>
                <ClearIcon />
                Clear
              </SmallItem>
              <SmallItem $disabled>
                <ReapplyIcon />
                Reapply
              </SmallItem>
              <SmallItem>
                <AdvancedIcon />
                Advanced
              </SmallItem>
            </SmallColumn>
          </GroupBody>
          <GroupLabel>Sort &amp; Filter</GroupLabel>
        </Group>

        <Group $w={199}>
          <GroupBody $pl={4}>
            <LargeButton $w={76}>
              <LargeIcon>
                <TextColumnsIcon />
              </LargeIcon>
              <LargeText>
                Text to
                <br />
                Columns
              </LargeText>
            </LargeButton>
            <SmallColumn $w={62} $ml={2}>
              <SmallItem>
                <FlashIcon />
              </SmallItem>
              <SmallItem>
                <DuplicatesIcon />
              </SmallItem>
              <SmallItem>
                <ValidationIcon />
                <ChevronWrap $ml={8}>
                  <Chevron />
                </ChevronWrap>
              </SmallItem>
            </SmallColumn>
            <SmallColumn>
              <SmallItem>
                <ConsolidateIcon />
              </SmallItem>
              <SmallItem>
                <ModelIcon />
                <ChevronWrap $ml={0}>
                  <Chevron />
                </ChevronWrap>
              </SmallItem>
              <SmallItem>
                <ManageModelIcon />
              </SmallItem>
            </SmallColumn>
          </GroupBody>
          <GroupLabel>Data Tools</GroupLabel>
        </Group>

        <Group $w={158}>
          <GroupBody $pl={11}>
            <LargeButton $w={72}>
              <LargeIcon>
                <WhatIfIcon />
              </LargeIcon>
              <LargeText>
                What-If
                <br />
                Analysis <Chevron />
              </LargeText>
            </LargeButton>
            <LargeButton $w={64} $ml={3}>
              <LargeIcon>
                <ForecastIcon />
              </LargeIcon>
              <LargeText>
                Forecast
                <br />
                Sheet
              </LargeText>
            </LargeButton>
          </GroupBody>
          <GroupLabel>Forecast</GroupLabel>
        </Group>

        <Group $w={182}>
          <GroupBody $pl={16}>
            <SmallColumn $w={133}>
              <SmallItem>
                <GroupIcon color={BLUE} mark="plus" />
                Group
                <ChevronWrap $ml={14}>
                  <Chevron />
                </ChevronWrap>
              </SmallItem>
              <SmallItem>
                <GroupIcon color="#e0524a" mark="slash" />
                Ungroup
                <ChevronWrap $ml={15}>
                  <Chevron />
                </ChevronWrap>
              </SmallItem>
              <SmallItem>
                <SubtotalIcon />
                Subtotal
              </SmallItem>
            </SmallColumn>
            <SmallColumn>
              <SmallItem>
                <OutlineDetailIcon />
              </SmallItem>
              <SmallItem>
                <OutlineDetailIcon minus />
              </SmallItem>
            </SmallColumn>
          </GroupBody>
          <GroupLabel>Outline</GroupLabel>
          <Launcher>
            <LauncherIcon />
          </Launcher>
        </Group>

        <RibbonCollapse>
          <svg width="14" height="8" viewBox="0 0 14 8" fill="none" stroke="#444" strokeWidth={1.3}>
            <path d="M1 1l6 6 6-6" />
          </svg>
        </RibbonCollapse>
      </Ribbon>

      <FormulaBar>
        <NameBox>
          A1
          <TinyDot />
        </NameBox>
        <DotsSlot>
          <VerticalDots />
        </DotsSlot>
        <FormulaButtons>
          <NameBoxX />
          <CheckMark />
          <FxText>fx</FxText>
        </FormulaButtons>
        <FormulaInput>
          {cells[0]}
          <svg width="14" height="8" viewBox="0 0 14 8" fill="none" stroke="#444" strokeWidth={1.3}>
            <path d="M1 1l6 6 6-6" />
          </svg>
        </FormulaInput>
      </FormulaBar>

      <SheetArea>
        <Sheet>
          <HeaderRow>
            <Corner>
              <svg width="15" height="15" viewBox="0 0 15 15" fill="#dcdcdc">
                <path d="M15 0v15H0z" />
              </svg>
            </Corner>
            <ColHeader $w={639} $selected>
              A
            </ColHeader>
            {columns.map(([name, w]) => (
              <ColHeader key={name || "end"} $w={w}>
                {name}
              </ColHeader>
            ))}
          </HeaderRow>
          {rows.map((n) => (
            <Row key={n}>
              <RowNum $selected={n <= 11}>{n <= 20 ? n : ""}</RowNum>
              <CellA $filled={n >= 2 && n <= 11} $wide={n === 1}>
                {cells[n - 1]}
              </CellA>
              {columns.map(([name, w]) => (
                <Cell key={name || "end"} $w={w} />
              ))}
            </Row>
          ))}
          <Selection>
            <FillHandle />
          </Selection>
        </Sheet>
        <VScroll>
          <Triangle dir="up" />
          <VThumb />
          <Triangle dir="down" />
        </VScroll>
      </SheetArea>

      <SheetBar>
        <NavArrows>
          <NavIcon left />
          <NavIcon />
        </NavArrows>
        <SheetTab>
          <SheetTabLabel>Sheet1</SheetTabLabel>
        </SheetTab>
        <TabSeparator />
        <AddSheet>
          <PlusIcon />
        </AddSheet>
        <SheetDots>
          <VerticalDots />
        </SheetDots>
        <HScroll>
          <Triangle dir="left" />
          <HThumb />
          <Triangle dir="right" />
        </HScroll>
      </SheetBar>

      <StatusStrip>
        <StatusHandle />
      </StatusStrip>
    </Window>
  );
};

export default App;
